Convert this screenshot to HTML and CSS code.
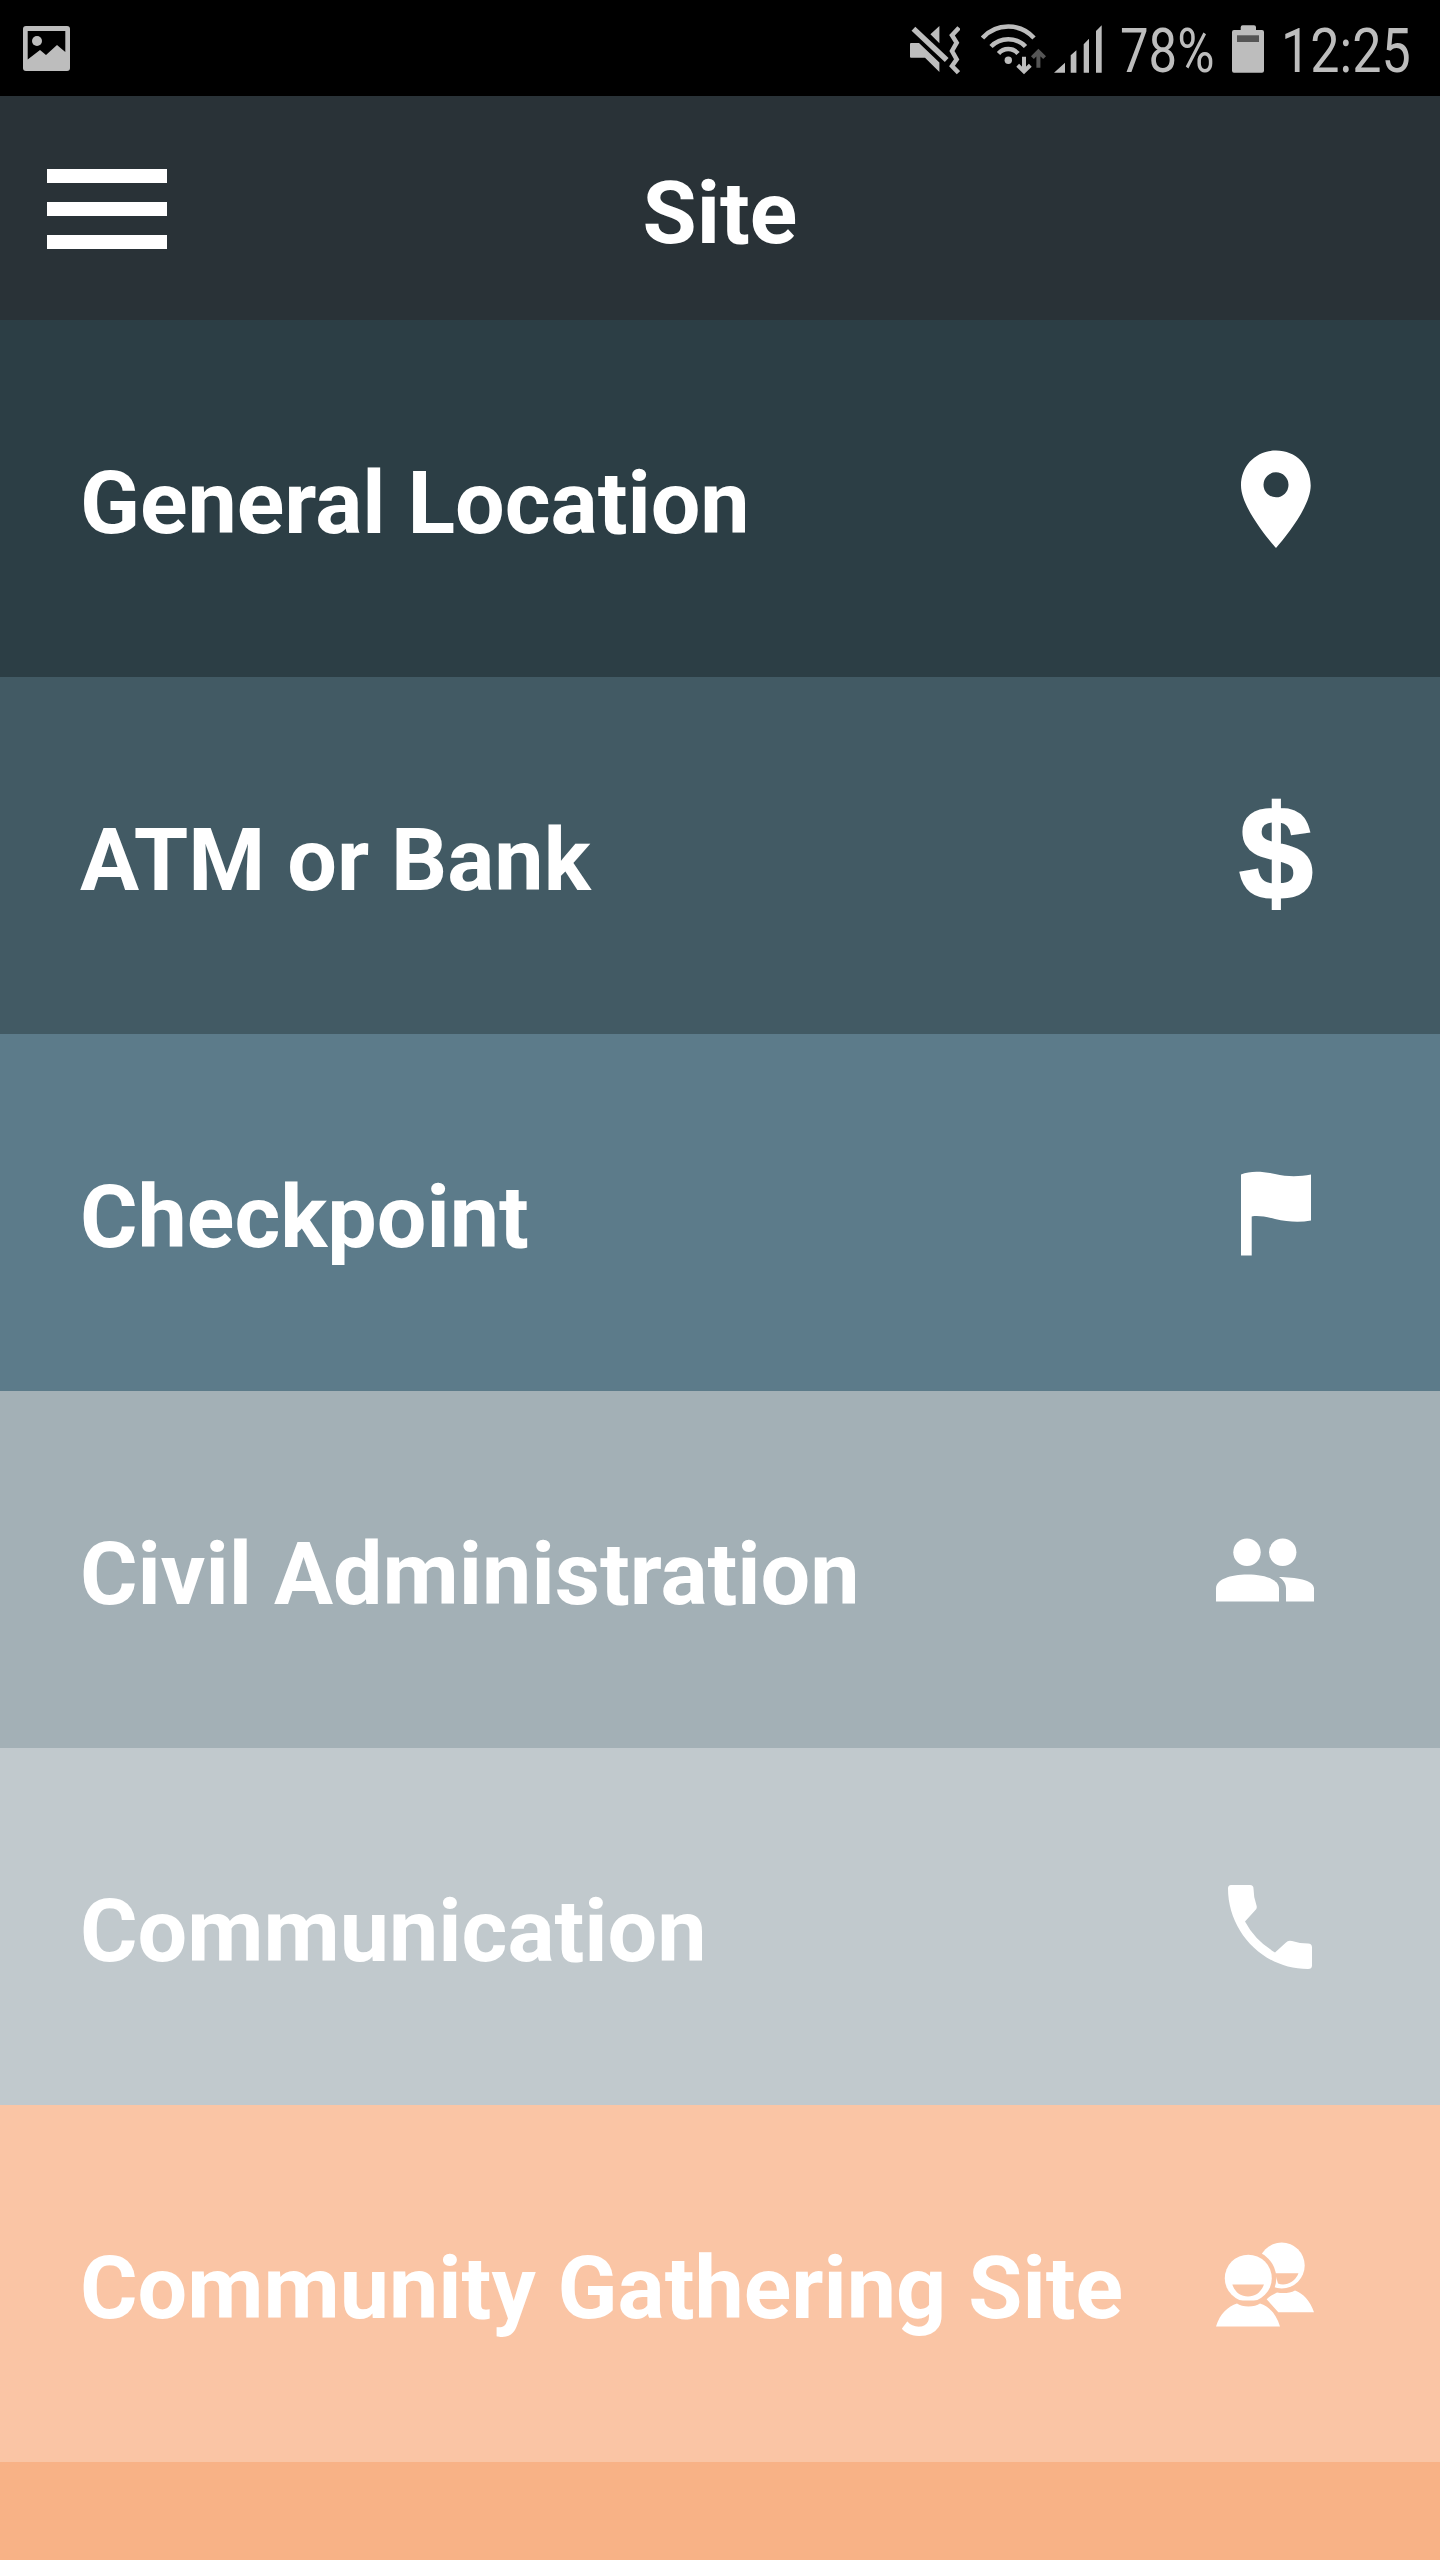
FILE: index.html
```html
<!DOCTYPE html>
<html lang="en">
<head>
<meta charset="utf-8">
<title>Site</title>
<link rel="stylesheet" href="styles.css">
</head>
<body>
<div class="screen">
  <div class="status">
    <svg class="st-img" width="47" height="96" viewBox="0 0 47 96"><rect class="st" x="0" y="26" width="47" height="45" rx="3"/><path class="bk" d="M4.700 31H42.300V52L34 45 23 55 17 50 4.700 59.500Z"/><circle class="st" cx="14" cy="41" r="5"/></svg>
    <div class="status-right">
      <svg class="st-mute" width="50" height="96" viewBox="0 0 50 96"><path class="st" d="M29.400 26V43.300L20.400 34.300ZM1 43H9L29.400 62.500V72L15 57.700H1Q0 57.700 0 56.700V44Q0 43 1 43Z"/><path class="ln" stroke-width="5.500" d="M3.400 28.700L36.700 60"/><path class="ln" stroke-width="4.500" d="M49 27.700L42 35.300 46.700 42.700 42 51 46.700 59.300 42 66 48.400 72.700"/></svg>
      <svg class="st-wifi" width="65" height="96" viewBox="0 0 65 96"><path class="ln" stroke-width="4.500" d="M1.500 38A34.700 34.700 0 0 1 53 38M10 46.500A24 24 0 0 1 44.500 46.500M17.500 53.500A13 13 0 0 1 37 53.500"/><circle class="st" cx="27.300" cy="60.300" r="3.700"/><path class="ln" stroke-width="4" d="M43 56.700V71M36.700 65.300L43 71.500 49.300 65.300"/><path class="dim" stroke-width="4" d="M57.400 67.700V52M51.400 57.700L57.400 51.500 63.600 57.700"/></svg>
      <svg class="st-signal" width="48" height="96" viewBox="0 0 48 96"><path class="st" d="M0 72.700H11V62.700ZM16.700 72.700V55.300L22.400 50.300V72.700ZM29.700 72.700V44.300L35 38.700V72.700ZM42 72.700V31L47.700 25.300V72.700Z"/></svg>
      <div class="st-text st-pct"><span>78%</span></div>
      <svg class="st-batt" width="32" height="96" viewBox="0 0 32 96"><path class="st" d="M8.700 30V27.300Q8.700 25.300 10.700 25.300H22Q24 25.300 24 27.300V30H30Q32 30 32 32V70.700Q32 72.700 30 72.700H2Q0 72.700 0 70.700V32Q0 30 2 30Z"/><rect class="lvl" x="5" y="35.300" width="22" height="6.700"/></svg>
      <div class="st-text st-time"><span>12:25</span></div>
    </div>
  </div>

  <header class="topbar">
    <div class="burger"><span></span><span></span><span></span></div>
    <h1 class="title">Site</h1>
  </header>

  <div class="row row-1">
    <span class="label">General Location</span>
    <svg class="icon" viewBox="0 -1.500 160 160"><path fill-rule="evenodd" d="M86 30C66 30 51 45 51 65C51 85 75 115 86 127.600C97 115 120.700 85 120.700 65C120.700 45 106 30 86 30ZM86 51.800A12.500 12.500 0 1 0 86 76.800A12.500 12.500 0 1 0 86 51.800Z"/></svg>
  </div>
  <div class="row row-2">
    <span class="label">ATM or Bank</span>
    <svg class="icon" viewBox="0 -4.500 160 160"><text class="dollar" x="86" y="118" text-anchor="middle">$</text></svg>
  </div>
  <div class="row row-3">
    <span class="label">Checkpoint</span>
    <svg class="icon" viewBox="0 -7.500 160 160"><path d="M51 115V34C60 30 72 30.500 85 33.500C98 36.500 110 36 121 34V80C110 82 98 81.500 85 78.500C75 76 68 75 61.700 76V115Z"/></svg>
  </div>
  <div class="row row-4">
    <span class="label">Civil Administration</span>
    <svg class="icon" viewBox="0 -10.500 160 160"><circle cx="57" cy="51.700" r="13.700"/><circle cx="92.700" cy="51.700" r="13.700"/><path d="M26 101V88C26 79 40 74 57.500 74S89 79 89 88V101Z"/><path d="M96 101V88C96 83 93.500 79.500 89 76.500C105 77 124 79 124 88V101Z"/></svg>
  </div>
  <div class="row row-5">
    <span class="label">Communication</span>
    <svg class="icon" viewBox="0 -3.500 160 160"><path d="M41 34.500H60Q63.500 34.500 63.500 38Q63.500 47 66.500 55Q67.500 58 65 60L55 71Q65 90 85 102L96 92Q98 89.500 102 90.500Q110 93 118 93Q122 93 122 97V115Q122 118.500 118 118.500C72 118.500 38 80 38 38Q38 34.500 41 34.500Z"/></svg>
  </div>
  <div class="row row-6">
    <span class="label">Community Gathering Site</span>
    <svg class="icon" viewBox="0 -6.500 160 160">
      <circle cx="91.700" cy="55" r="23"/>
      <path class="cut" d="M85 62.700H108.500C105 72 95 76 88 73Z"/>
      <path d="M88.300 101.700H124C120 90 113 83 105 80C100 83 92 83 87 82L76 88Z"/>
      <circle class="cut" cx="58.300" cy="67.700" r="28"/>
      <circle cx="58.300" cy="67.700" r="23.500"/>
      <path class="cut" d="M42.300 74H74C71 82 65 86 58 86S45 82 42.300 74Z"/>
      <path class="cut" d="M20 120L40 90H76L96 120Z"/>
      <path d="M26 116C30 103 38 96 47 93C52 97 65 97 70 93C79 96 86 103 90 116Z"/>
    </svg>
  </div>
  <div class="row row-7"></div>
</div>
</body>
</html>
```
FILE: styles.css
```css
* { box-sizing: border-box; }
html, body { margin: 0; padding: 0; }
body { background: #000; font-family: Roboto, "Liberation Sans", sans-serif; }
.screen { width: 1440px; height: 2560px; display: flex; flex-direction: column; overflow: hidden; }

.status { height: 96px; flex: none; background: #000; display: flex; justify-content: space-between; padding: 0 26px 0 23px; }
.status svg { display: block; flex: none; }
.status-right { display: flex; }
.st-wifi { margin-left: 21px; }
.st-signal { margin-left: 8px; }
.st-batt { margin-left: 18px; }
.st-text { flex: none; height: 96px; font-size: 62px; font-weight: 400; line-height: 101px; color: #bdbdbd; white-space: nowrap; }
.st-text span { display: block; width: max-content; transform: scaleX(0.82); transform-origin: 0 50%; }
.st-pct { width: 94px; margin-left: 18px; }
.st-time { width: 133px; margin-left: 17px; }
.st-time span { transform: scaleX(0.84); }
.st { fill: #bdbdbd; }
.bk { fill: #000; }
.lvl { fill: #555; }
.ln { fill: none; stroke: #bdbdbd; }
.dim { fill: none; stroke: #555; }

.topbar { height: 224px; flex: none; background: #293237; display: flex; align-items: center; justify-content: center; position: relative; }
.burger { position: absolute; left: 47px; top: 73px; width: 120px; display: flex; flex-direction: column; gap: 19px; }
.burger span { display: block; height: 14px; background: #fff; }
.title { margin: 0; color: #fff; font-size: 88px; font-weight: 700; line-height: 1; padding-top: 10px; }

.row { height: 357px; flex: none; display: flex; align-items: center; justify-content: space-between; padding: 0 90px 0 80px; }
.label { color: #fff; font-size: 88px; font-weight: 700; line-height: 1; padding-top: 8px; }
.icon { width: 160px; height: 160px; flex: none; fill: #fff; }
.dollar { font-family: "Liberation Sans", sans-serif; font-weight: 700; font-size: 134px; fill: #fff; stroke: #fff; stroke-width: 2px; }
.row-1 { background: #2c3e45; }
.row-2 { background: #425a64; }
.row-3 { background: #5c7b8a; }
.row-4 { background: #a3b0b6; }
.row-5 { background: #c1c9cd; }
.row-6 { background: #fac5a5; }
.row-7 { background: #f8b286; flex: 1; }
.cut { fill: #fac5a5; }
```
